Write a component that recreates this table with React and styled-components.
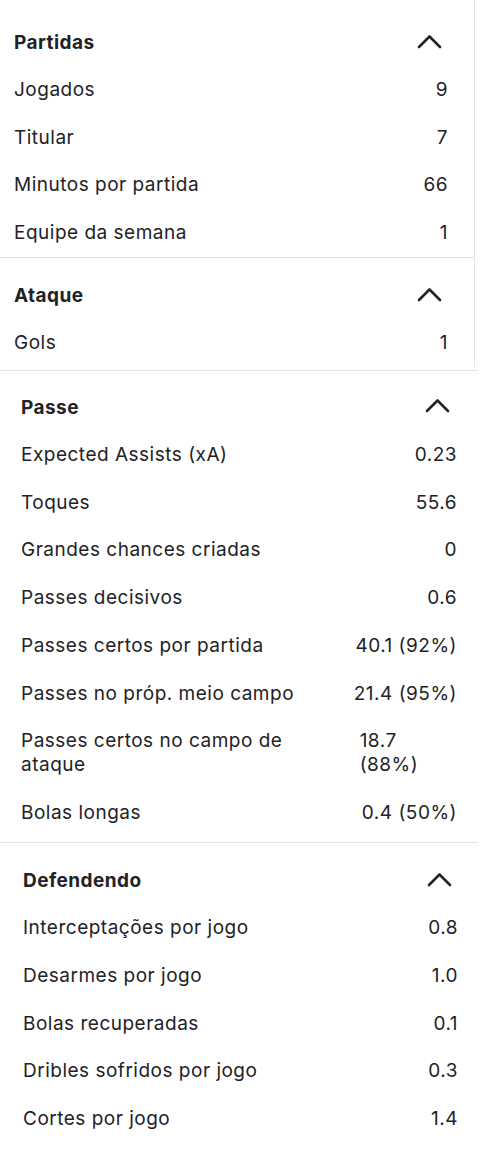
import React from "react";
import styled, { createGlobalStyle } from "styled-components";

const GlobalStyle = createGlobalStyle`
  body {
    margin: 0;
    background: #ffffff;
    font-family: Inter, "Noto Sans", sans-serif;
    color: #222226;
  }
`;

const sections = [
  {
    block: 0,
    title: "Partidas",
    rows: [
      ["Jogados", "9"],
      ["Titular", "7"],
      ["Minutos por partida", "66"],
      ["Equipe da semana", "1"],
    ],
  },
  {
    block: 0,
    title: "Ataque",
    rows: [["Gols", "1"]],
  },
  {
    block: 1,
    title: "Passe",
    rows: [
      ["Expected Assists (xA)", "0.23"],
      ["Toques", "55.6"],
      ["Grandes chances criadas", "0"],
      ["Passes decisivos", "0.6"],
      ["Passes certos por partida", "40.1 (92%)"],
      ["Passes no próp. meio campo", "21.4 (95%)"],
      ["Passes certos no campo de ataque", "18.7 (88%)"],
      ["Bolas longas", "0.4 (50%)"],
    ],
  },
  {
    block: 2,
    title: "Defendendo",
    rows: [
      ["Interceptações por jogo", "0.8"],
      ["Desarmes por jogo", "1.0"],
      ["Bolas recuperadas", "0.1"],
      ["Dribles sofridos por jogo", "0.3"],
      ["Cortes por jogo", "1.4"],
    ],
  },
];

// each captured block sits a few pixels to the right of the previous one
const blocks = [
  { left: 14, right: 26, chevron: 6, top: 15 },
  { left: 21, right: 25, chevron: 7, top: 14 },
  { left: 23, right: 24, chevron: 6, top: 15 },
];

function Chevron() {
  return (
    <svg width="25" height="15" viewBox="0 0 25 15">
      <polyline
        points="2,13 12.5,2.5 23,13"
        fill="none"
        stroke="#222226"
        strokeWidth="2.6"
        strokeLinecap="round"
        strokeLinejoin="round"
      />
    </svg>
  );
}

function Section({ section }) {
  const b = blocks[section.block];
  const top = section.title === "Partidas" ? 20 : b.top;
  return (
    <Group $left={b.left} $right={b.right} $top={top}>
      <Header>
        <Title>{section.title}</Title>
        <Toggle $offset={b.chevron}>
          <Chevron />
        </Toggle>
      </Header>
      {section.rows.map(([label, value]) => (
        <Row key={label}>
          <Label>{label}</Label>
          <Value>{value}</Value>
        </Row>
      ))}
    </Group>
  );
}

export default function App() {
  return (
    <>
      <GlobalStyle />
      <Page>
        <TopBlock>
          <Section section={sections[0]} />
          <Divider $width={474} />
          <Section section={sections[1]} />
        </TopBlock>
        <Divider $width={478} $top={3} />
        <Section section={sections[2]} />
        <Divider $width={478} $top={5} />
        <Section section={sections[3]} />
      </Page>
    </>
  );
}

const Page = styled.div`
  width: 482px;
  min-height: 1167px;
  background: #ffffff;
  overflow: hidden;
`;

const TopBlock = styled.div`
  width: 474px;
  border-right: 1px solid #e4e4e4;
`;

const Divider = styled.div`
  width: ${(p) => p.$width}px;
  height: 1px;
  margin-top: ${(p) => p.$top || 0}px;
  background: #e0e0e0;
`;

const Group = styled.section`
  padding: ${(p) => p.$top}px ${(p) => p.$right}px 0 ${(p) => p.$left}px;
`;

const Header = styled.div`
  display: flex;
  align-items: center;
  justify-content: space-between;
  height: 46px;
`;

const Title = styled.h3`
  margin: 0;
  font-size: 19px;
  font-weight: 650;
  letter-spacing: 0.45px;
  line-height: 24px;
`;

const Toggle = styled.span`
  display: flex;
  margin-right: ${(p) => p.$offset}px;
  margin-top: -4px;
`;

const Row = styled.div`
  display: flex;
  align-items: center;
  gap: 20px;
  padding: 11.9px 0;
  font-size: 19px;
  letter-spacing: 0.5px;
  line-height: 24px;
`;

const Label = styled.span`
  flex: 0 1 auto;
`;

const Value = styled.span`
  flex: 0 1 auto;
  margin-left: auto;
  text-align: left;
`;
